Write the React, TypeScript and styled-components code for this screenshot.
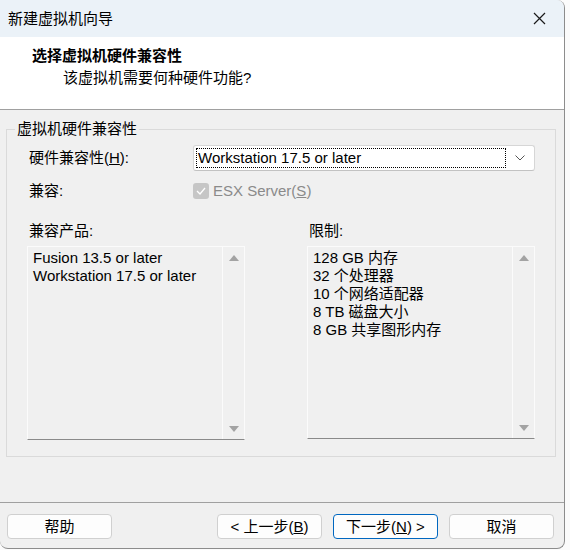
import styled, { createGlobalStyle } from "styled-components";

const GlobalStyle = createGlobalStyle`
  html, body {
    margin: 0;
    padding: 0;
    background: #fbfbfb;
  }
  body {
    font-family: "Liberation Sans", "Noto Sans CJK SC", sans-serif;
    font-size: 15px;
    color: #000;
  }
`;

const Window = styled.div`
  width: 564px;
  height: 548px;
  display: flex;
  flex-direction: column;
  background: #f0f0f0;
  border-right: 1px solid #8c8c8c;
  border-bottom: 1px solid #8c8c8c;
  border-radius: 0 8px 8px 8px;
  overflow: hidden;
`;

const TitleBar = styled.div`
  height: 37px;
  flex: none;
  display: flex;
  align-items: center;
  justify-content: space-between;
  padding: 0 18px 0 8px;
  background: #ebf2f8;
  line-height: 20px;
`;

const CloseButton = styled.svg`
  width: 13px;
  height: 13px;
`;

const Header = styled.div`
  height: 73px;
  flex: none;
  background: #fff;
  border-bottom: 1px solid #a0a0a0;
  padding-top: 9px;
  box-sizing: border-box;
  line-height: 20px;
`;

const HeaderTitle = styled.div`
  padding-left: 32px;
  font-weight: 700;
`;

const HeaderSub = styled.div`
  padding-left: 63px;
  margin-top: 2px;
`;

const Body = styled.div`
  flex: 1;
  padding: 0 8px 0 6px;
`;

const Group = styled.fieldset`
  margin: 9px 0 0;
  padding: 6px 20px 16px 20px;
  border: 1px solid #dadada;
  min-width: 0;
`;

const Legend = styled.legend`
  margin-left: -12px;
  padding: 0 2px;
  line-height: 20px;
`;

const FormGrid = styled.div`
  display: grid;
  grid-template-columns: 166px 1fr;
  align-items: center;
  row-gap: 11px;
`;

const Label = styled.div`
  padding-left: 2px;
  line-height: 18px;
`;

const Combo = styled.div`
  height: 26px;
  box-sizing: border-box;
  display: flex;
  align-items: center;
  padding: 2px 4px 2px 2px;
  background: #fff;
  border: 1px solid #d6d6d6;
  border-bottom-color: #c2c2c2;
  border-radius: 3px;
`;

const ComboValue = styled.div`
  flex: 1;
  height: 100%;
  box-sizing: border-box;
  border: 1px dotted #000;
  display: flex;
  align-items: center;
  padding-left: 1px;
  line-height: 18px;
`;

const Chevron = styled.svg`
  width: 10px;
  height: 6px;
  margin: 0 5px 0 9px;
`;

const CheckRow = styled.div`
  display: flex;
  align-items: center;
  gap: 4px;
  color: #8a8a8a;
  line-height: 18px;
`;

const CheckBox = styled.span`
  width: 16px;
  height: 16px;
  border-radius: 3px;
  background: #c6c6c6;
  display: flex;
  align-items: center;
  justify-content: center;
`;

const Columns = styled.div`
  display: grid;
  grid-template-columns: 218px 228px;
  justify-content: space-between;
  margin-top: 22px;
`;

const Column = styled.div`
  display: flex;
  flex-direction: column;
  gap: 6px;
`;

const ListBox = styled.div<{ $height: number }>`
  height: ${({ $height }) => $height}px;
  box-sizing: border-box;
  display: flex;
  border: 1px solid #fbfbfb;
  border-bottom-color: #8a8a8a;
`;

const ListItems = styled.div`
  flex: 1;
  padding: 2px 5px;
  line-height: 18px;
`;

const ScrollBar = styled.div`
  width: 21px;
  border-left: 1px solid #fbfbfb;
  display: flex;
  flex-direction: column;
  justify-content: space-between;
  align-items: center;
  padding: 8px 0 7px;
`;

const Arrow = styled.svg`
  width: 10px;
  height: 6px;
`;

const Footer = styled.div`
  height: 46px;
  flex: none;
  box-sizing: border-box;
  border-top: 1px solid #a0a0a0;
  display: flex;
  justify-content: space-between;
  padding: 11px 10px 0 7px;
`;

const ButtonGroup = styled.div`
  display: flex;
  gap: 11px;
`;

const Button = styled.button<{ $primary?: boolean }>`
  width: 105px;
  height: 25px;
  padding: 0;
  font: inherit;
  line-height: 18px;
  color: #000;
  background: #fdfdfd;
  border: 1px solid ${({ $primary }) => ($primary ? "#0067c0" : "#d0d0d0")};
  border-radius: 4px;
`;

const UpArrow = () => (
  <Arrow viewBox="0 0 10 6">
    <path d="M5 0 L10 6 L0 6 Z" fill="#a3a3a3" />
  </Arrow>
);

const DownArrow = () => (
  <Arrow viewBox="0 0 10 6">
    <path d="M0 0 L10 0 L5 6 Z" fill="#a3a3a3" />
  </Arrow>
);

const products = ["Fusion 13.5 or later", "Workstation 17.5 or later"];
const limits = ["128 GB 内存", "32 个处理器", "10 个网络适配器", "8 TB 磁盘大小", "8 GB 共享图形内存"];

export default function App() {
  return (
    <>
      <GlobalStyle />
      <Window>
        <TitleBar>
          <span>新建虚拟机向导</span>
          <CloseButton viewBox="0 0 13 13">
            <path d="M1 1 L12 12 M12 1 L1 12" stroke="#1a1a1a" strokeWidth="1.2" />
          </CloseButton>
        </TitleBar>
        <Header>
          <HeaderTitle>选择虚拟机硬件兼容性</HeaderTitle>
          <HeaderSub>该虚拟机需要何种硬件功能?</HeaderSub>
        </Header>
        <Body>
          <Group>
            <Legend>虚拟机硬件兼容性</Legend>
            <FormGrid>
              <Label>
                硬件兼容性(<u>H</u>):
              </Label>
              <Combo>
                <ComboValue>Workstation 17.5 or later</ComboValue>
                <Chevron viewBox="0 0 10 6">
                  <path d="M0.5 0.5 L5 5 L9.5 0.5" fill="none" stroke="#555" strokeWidth="1" />
                </Chevron>
              </Combo>
              <Label>兼容:</Label>
              <CheckRow>
                <CheckBox>
                  <svg width="10" height="8" viewBox="0 0 10 8">
                    <path d="M1 4 L4 7 L9 1" fill="none" stroke="#fff" strokeWidth="1.3" />
                  </svg>
                </CheckBox>
                <span>
                  ESX Server(<u>S</u>)
                </span>
              </CheckRow>
            </FormGrid>
            <Columns>
              <Column>
                <Label>兼容产品:</Label>
                <ListBox $height={194}>
                  <ListItems>
                    {products.map((p) => (
                      <div key={p}>{p}</div>
                    ))}
                  </ListItems>
                  <ScrollBar>
                    <UpArrow />
                    <DownArrow />
                  </ScrollBar>
                </ListBox>
              </Column>
              <Column>
                <Label>限制:</Label>
                <ListBox $height={193}>
                  <ListItems>
                    {limits.map((l) => (
                      <div key={l}>{l}</div>
                    ))}
                  </ListItems>
                  <ScrollBar>
                    <UpArrow />
                    <DownArrow />
                  </ScrollBar>
                </ListBox>
              </Column>
            </Columns>
          </Group>
        </Body>
        <Footer>
          <Button>帮助</Button>
          <ButtonGroup>
            <Button>
              &lt; 上一步(<u>B</u>)
            </Button>
            <Button $primary>
              下一步(<u>N</u>) &gt;
            </Button>
            <Button>取消</Button>
          </ButtonGroup>
        </Footer>
      </Window>
    </>
  );
}
